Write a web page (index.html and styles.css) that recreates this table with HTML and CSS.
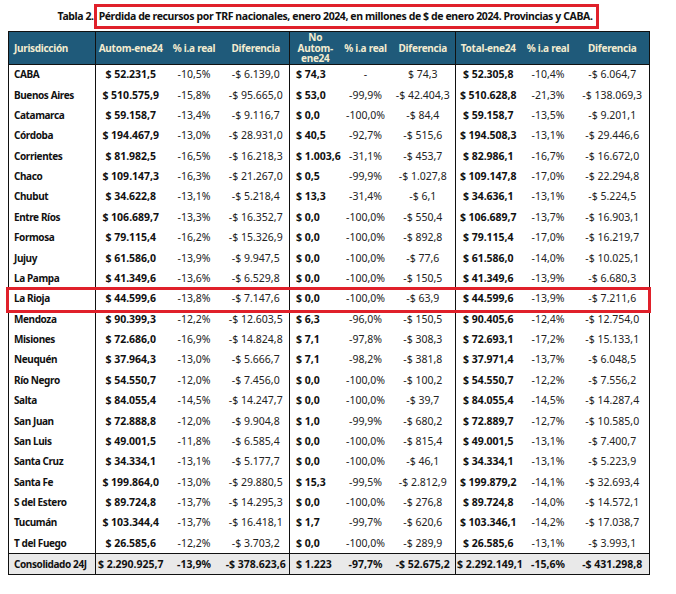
FILE: index.html
```html
<!DOCTYPE html>
<html lang="es">
<head>
<meta charset="utf-8">
<title>Tabla 2</title>
<link rel="stylesheet" href="styles.css">
</head>
<body>
<div class="page">
  <div class="title">
    <span class="title-lead">Tabla 2.</span>
    <span class="title-box">Pérdida de recursos por TRF nacionales, enero 2024, en millones de $ de enero 2024. Provincias y CABA.</span>
  </div>
  <div class="table-wrap">
    <table class="data">
      <colgroup>
        <col class="c-name">
        <col class="c-a1"><col class="c-a2"><col class="c-a3">
        <col class="c-b1"><col class="c-b2"><col class="c-b3">
        <col class="c-t1"><col class="c-t2"><col class="c-t3">
      </colgroup>
      <thead>
        <tr class="head">
          <th class="name">Jurisdicción</th>
          <th class="grp">Autom-ene24</th>
          <th>% i.a real</th>
          <th>Diferencia</th>
          <th class="grp">No<br>Autom-<br>ene24</th>
          <th>% i.a real</th>
          <th>Diferencia</th>
          <th class="grp">Total-ene24</th>
          <th>% i.a real</th>
          <th>Diferencia</th>
        </tr>
      </thead>
      <tbody>
        <tr><td class="name">CABA</td><td class="grp b">$ 52.231,5</td><td>-10,5%</td><td>-$ 6.139,0</td><td class="grp b left">$ 74,3</td><td>-</td><td>$ 74,3</td><td class="grp b">$ 52.305,8</td><td>-10,4%</td><td>-$ 6.064,7</td></tr>
        <tr><td class="name">Buenos Aires</td><td class="grp b">$ 510.575,9</td><td>-15,8%</td><td>-$ 95.665,0</td><td class="grp b left">$ 53,0</td><td>-99,9%</td><td>-$ 42.404,3</td><td class="grp b">$ 510.628,8</td><td>-21,3%</td><td>-$ 138.069,3</td></tr>
        <tr><td class="name">Catamarca</td><td class="grp b">$ 59.158,7</td><td>-13,4%</td><td>-$ 9.116,7</td><td class="grp b left">$ 0,0</td><td>-100,0%</td><td>-$ 84,4</td><td class="grp b">$ 59.158,7</td><td>-13,5%</td><td>-$ 9.201,1</td></tr>
        <tr><td class="name">Córdoba</td><td class="grp b">$ 194.467,9</td><td>-13,0%</td><td>-$ 28.931,0</td><td class="grp b left">$ 40,5</td><td>-92,7%</td><td>-$ 515,6</td><td class="grp b">$ 194.508,3</td><td>-13,1%</td><td>-$ 29.446,6</td></tr>
        <tr><td class="name">Corrientes</td><td class="grp b">$ 81.982,5</td><td>-16,5%</td><td>-$ 16.218,3</td><td class="grp b left">$ 1.003,6</td><td>-31,1%</td><td>-$ 453,7</td><td class="grp b">$ 82.986,1</td><td>-16,7%</td><td>-$ 16.672,0</td></tr>
        <tr><td class="name">Chaco</td><td class="grp b">$ 109.147,3</td><td>-16,3%</td><td>-$ 21.267,0</td><td class="grp b left">$ 0,5</td><td>-99,9%</td><td>-$ 1.027,8</td><td class="grp b">$ 109.147,8</td><td>-17,0%</td><td>-$ 22.294,8</td></tr>
        <tr><td class="name">Chubut</td><td class="grp b">$ 34.622,8</td><td>-13,1%</td><td>-$ 5.218,4</td><td class="grp b left">$ 13,3</td><td>-31,4%</td><td>-$ 6,1</td><td class="grp b">$ 34.636,1</td><td>-13,1%</td><td>-$ 5.224,5</td></tr>
        <tr><td class="name">Entre Ríos</td><td class="grp b">$ 106.689,7</td><td>-13,3%</td><td>-$ 16.352,7</td><td class="grp b left">$ 0,0</td><td>-100,0%</td><td>-$ 550,4</td><td class="grp b">$ 106.689,7</td><td>-13,7%</td><td>-$ 16.903,1</td></tr>
        <tr><td class="name">Formosa</td><td class="grp b">$ 79.115,4</td><td>-16,2%</td><td>-$ 15.326,9</td><td class="grp b left">$ 0,0</td><td>-100,0%</td><td>-$ 892,8</td><td class="grp b">$ 79.115,4</td><td>-17,0%</td><td>-$ 16.219,7</td></tr>
        <tr><td class="name">Jujuy</td><td class="grp b">$ 61.586,0</td><td>-13,9%</td><td>-$ 9.947,5</td><td class="grp b left">$ 0,0</td><td>-100,0%</td><td>-$ 77,6</td><td class="grp b">$ 61.586,0</td><td>-14,0%</td><td>-$ 10.025,1</td></tr>
        <tr><td class="name">La Pampa</td><td class="grp b">$ 41.349,6</td><td>-13,6%</td><td>-$ 6.529,8</td><td class="grp b left">$ 0,0</td><td>-100,0%</td><td>-$ 150,5</td><td class="grp b">$ 41.349,6</td><td>-13,9%</td><td>-$ 6.680,3</td></tr>
        <tr><td class="name">La Rioja</td><td class="grp b">$ 44.599,6</td><td>-13,8%</td><td>-$ 7.147,6</td><td class="grp b left">$ 0,0</td><td>-100,0%</td><td>-$ 63,9</td><td class="grp b">$ 44.599,6</td><td>-13,9%</td><td>-$ 7.211,6</td></tr>
        <tr><td class="name">Mendoza</td><td class="grp b">$ 90.399,3</td><td>-12,2%</td><td>-$ 12.603,5</td><td class="grp b left">$ 6,3</td><td>-96,0%</td><td>-$ 150,5</td><td class="grp b">$ 90.405,6</td><td>-12,4%</td><td>-$ 12.754,0</td></tr>
        <tr><td class="name">Misiones</td><td class="grp b">$ 72.686,0</td><td>-16,9%</td><td>-$ 14.824,8</td><td class="grp b left">$ 7,1</td><td>-97,8%</td><td>-$ 308,3</td><td class="grp b">$ 72.693,1</td><td>-17,2%</td><td>-$ 15.133,1</td></tr>
        <tr><td class="name">Neuquén</td><td class="grp b">$ 37.964,3</td><td>-13,0%</td><td>-$ 5.666,7</td><td class="grp b left">$ 7,1</td><td>-98,2%</td><td>-$ 381,8</td><td class="grp b">$ 37.971,4</td><td>-13,7%</td><td>-$ 6.048,5</td></tr>
        <tr><td class="name">Río Negro</td><td class="grp b">$ 54.550,7</td><td>-12,0%</td><td>-$ 7.456,0</td><td class="grp b left">$ 0,0</td><td>-100,0%</td><td>-$ 100,2</td><td class="grp b">$ 54.550,7</td><td>-12,2%</td><td>-$ 7.556,2</td></tr>
        <tr><td class="name">Salta</td><td class="grp b">$ 84.055,4</td><td>-14,5%</td><td>-$ 14.247,7</td><td class="grp b left">$ 0,0</td><td>-100,0%</td><td>-$ 39,7</td><td class="grp b">$ 84.055,4</td><td>-14,5%</td><td>-$ 14.287,4</td></tr>
        <tr><td class="name">San Juan</td><td class="grp b">$ 72.888,8</td><td>-12,0%</td><td>-$ 9.904,8</td><td class="grp b left">$ 1,0</td><td>-99,9%</td><td>-$ 680,2</td><td class="grp b">$ 72.889,7</td><td>-12,7%</td><td>-$ 10.585,0</td></tr>
        <tr><td class="name">San Luis</td><td class="grp b">$ 49.001,5</td><td>-11,8%</td><td>-$ 6.585,4</td><td class="grp b left">$ 0,0</td><td>-100,0%</td><td>-$ 815,4</td><td class="grp b">$ 49.001,5</td><td>-13,1%</td><td>-$ 7.400,7</td></tr>
        <tr><td class="name">Santa Cruz</td><td class="grp b">$ 34.334,1</td><td>-13,1%</td><td>-$ 5.177,7</td><td class="grp b left">$ 0,0</td><td>-100,0%</td><td>-$ 46,1</td><td class="grp b">$ 34.334,1</td><td>-13,1%</td><td>-$ 5.223,9</td></tr>
        <tr><td class="name">Santa Fe</td><td class="grp b">$ 199.864,0</td><td>-13,0%</td><td>-$ 29.880,5</td><td class="grp b left">$ 15,3</td><td>-99,5%</td><td>-$ 2.812,9</td><td class="grp b">$ 199.879,2</td><td>-14,1%</td><td>-$ 32.693,4</td></tr>
        <tr><td class="name">S del Estero</td><td class="grp b">$ 89.724,8</td><td>-13,7%</td><td>-$ 14.295,3</td><td class="grp b left">$ 0,0</td><td>-100,0%</td><td>-$ 276,8</td><td class="grp b">$ 89.724,8</td><td>-14,0%</td><td>-$ 14.572,1</td></tr>
        <tr><td class="name">Tucumán</td><td class="grp b">$ 103.344,4</td><td>-13,7%</td><td>-$ 16.418,1</td><td class="grp b left">$ 1,7</td><td>-99,7%</td><td>-$ 620,6</td><td class="grp b">$ 103.346,1</td><td>-14,2%</td><td>-$ 17.038,7</td></tr>
        <tr><td class="name">T del Fuego</td><td class="grp b">$ 26.585,6</td><td>-12,2%</td><td>-$ 3.703,2</td><td class="grp b left">$ 0,0</td><td>-100,0%</td><td>-$ 289,9</td><td class="grp b">$ 26.585,6</td><td>-13,1%</td><td>-$ 3.993,1</td></tr>
      </tbody>
      <tfoot>
        <tr class="total"><td class="name">Consolidado 24J</td><td class="grp">$ 2.290.925,7</td><td>-13,9%</td><td>-$ 378.623,6</td><td class="grp left">$ 1.223</td><td>-97,7%</td><td>-$ 52.675,2</td><td class="grp">$ 2.292.149,1</td><td>-15,6%</td><td>-$ 431.298,8</td></tr>
      </tfoot>
    </table>
    <div class="highlight"></div>
  </div>
</div>
</body>
</html>
```
FILE: styles.css
```css
html, body {
  margin: 0;
  padding: 0;
  background: #ffffff;
}

body {
  font-family: "Noto Sans", "DejaVu Sans Condensed", sans-serif;
  font-stretch: condensed;
  color: #161616;
}

.page {
  padding: 0 8px;
  width: 641px;
}

.title {
  height: 31px;
  box-sizing: border-box;
  padding-top: 4px;
  display: flex;
  justify-content: center;
  align-items: baseline;
  font-size: 10.5px;
  letter-spacing: -0.4px;
  font-weight: bold;
  color: #111;
}

.title-box {
  border: 3px solid #e0202a;
  padding: 3px 4px 3px 2px;
  line-height: 13px;
  white-space: nowrap;
}

.table-wrap {
  position: relative;
}

.data {
  width: 641px;
  table-layout: fixed;
  border-collapse: collapse;
  border: 1px solid #111;
}

.c-name { width: 87px; }
.c-a1 { width: 70px; }
.c-a2 { width: 57px; }
.c-a3 { width: 67px; }
.c-b1 { width: 51px; }
.c-b2 { width: 50px; }
.c-b3 { width: 65px; }
.c-t1 { width: 65px; }
.c-t2 { width: 55px; }
.c-t3 { width: 74px; }

.data th,
.data td {
  padding: 0 1px;
  text-align: center;
  white-space: nowrap;
}

.head {
  height: 33px;
}

.head th {
  background: #1f5a7a;
  color: #f3ecd0;
  font-size: 10px;
  letter-spacing: -0.25px;
  font-weight: bold;
  line-height: 10.5px;
  vertical-align: middle;
  border-bottom: 1px solid #111;
}

.data .name {
  text-align: left;
  padding-left: 5px;
  font-weight: bold;
  font-size: 10px;
  letter-spacing: -0.4px;
}

.head th.name {
  font-size: 10px;
  letter-spacing: -0.3px;
}

.data .grp {
  border-left: 1px solid #111;
}

.data .left {
  text-align: left;
  padding-left: 6px;
}

tbody tr {
  height: 20.375px;
}

tbody td,
tfoot td {
  font-size: 10.5px;
  line-height: 13px;
  padding-top: 3px;
  vertical-align: middle;
  color: #222;
}

.data td.name {
  color: #111;
}

tbody td.b {
  font-weight: bold;
  color: #111;
}

.total {
  height: 21px;
  background: #e9e9e9;
}

.total td {
  border-top: 1px solid #111;
  font-weight: bold;
  padding-top: 1px;
  color: #111;
}

.highlight {
  position: absolute;
  top: 256px;
  left: -2px;
  width: 645px;
  height: 26px;
  box-sizing: border-box;
  border: 3px solid #e0202a;
  pointer-events: none;
}
```
